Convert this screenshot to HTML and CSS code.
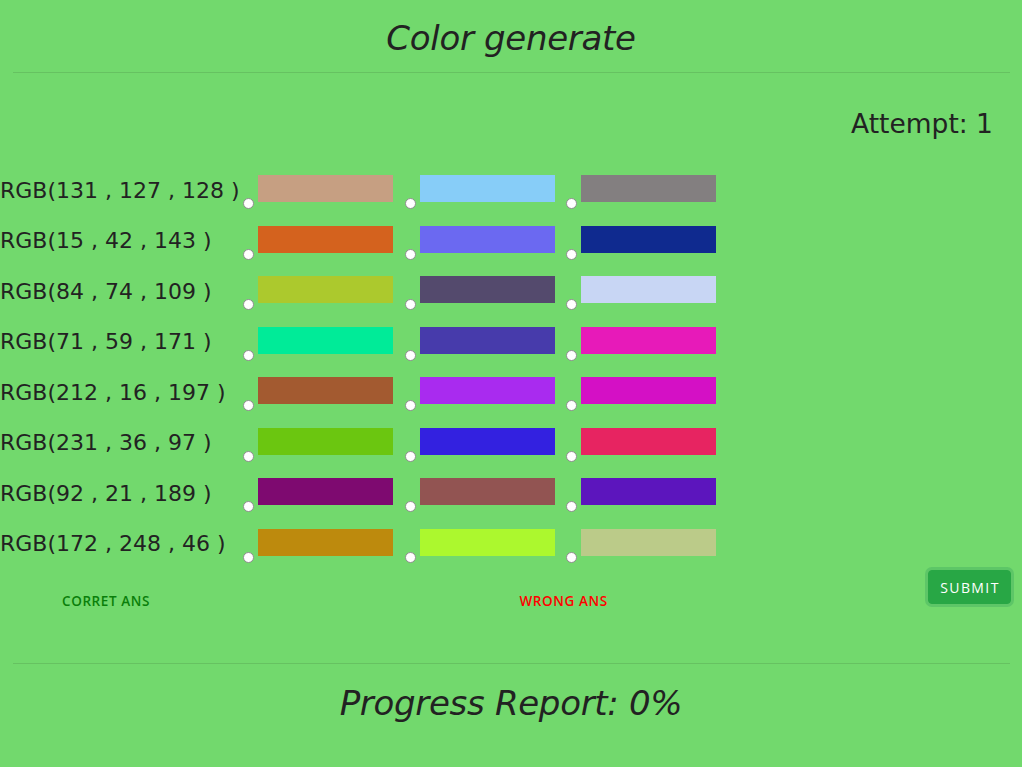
FILE: index.html
```html
<!DOCTYPE html>
<html lang="en">
<head>
<meta charset="utf-8">
<title>Color generate</title>
<link rel="stylesheet" href="styles.css">
</head>
<body>
<header class="top">
  <h1 class="title">Color generate</h1>
</header>
<div class="rule"></div>
<div class="attempt">Attempt: 1</div>

<div class="rows">
  <div class="row">
    <span class="label">RGB(131 , 127 , 128 )</span>
    <label class="opt"><input type="radio" name="q1" class="radio"><span class="swatch" style="background:#c69f82"></span></label>
    <label class="opt"><input type="radio" name="q1" class="radio"><span class="swatch" style="background:#87cdf8"></span></label>
    <label class="opt"><input type="radio" name="q1" class="radio"><span class="swatch" style="background:rgb(131,127,128)"></span></label>
  </div>
  <div class="row">
    <span class="label">RGB(15 , 42 , 143 )</span>
    <label class="opt"><input type="radio" name="q2" class="radio"><span class="swatch" style="background:#d4621e"></span></label>
    <label class="opt"><input type="radio" name="q2" class="radio"><span class="swatch" style="background:#6b69f1"></span></label>
    <label class="opt"><input type="radio" name="q2" class="radio"><span class="swatch" style="background:rgb(15,42,143)"></span></label>
  </div>
  <div class="row">
    <span class="label">RGB(84 , 74 , 109 )</span>
    <label class="opt"><input type="radio" name="q3" class="radio"><span class="swatch" style="background:#acc92d"></span></label>
    <label class="opt"><input type="radio" name="q3" class="radio"><span class="swatch" style="background:rgb(84,74,109)"></span></label>
    <label class="opt"><input type="radio" name="q3" class="radio"><span class="swatch" style="background:#c8d6f4"></span></label>
  </div>
  <div class="row">
    <span class="label">RGB(71 , 59 , 171 )</span>
    <label class="opt"><input type="radio" name="q4" class="radio"><span class="swatch" style="background:#00eb98"></span></label>
    <label class="opt"><input type="radio" name="q4" class="radio"><span class="swatch" style="background:rgb(71,59,171)"></span></label>
    <label class="opt"><input type="radio" name="q4" class="radio"><span class="swatch" style="background:#e71ab9"></span></label>
  </div>
  <div class="row">
    <span class="label">RGB(212 , 16 , 197 )</span>
    <label class="opt"><input type="radio" name="q5" class="radio"><span class="swatch" style="background:#a35a30"></span></label>
    <label class="opt"><input type="radio" name="q5" class="radio"><span class="swatch" style="background:#a92bef"></span></label>
    <label class="opt"><input type="radio" name="q5" class="radio"><span class="swatch" style="background:rgb(212,16,197)"></span></label>
  </div>
  <div class="row">
    <span class="label">RGB(231 , 36 , 97 )</span>
    <label class="opt"><input type="radio" name="q6" class="radio"><span class="swatch" style="background:#6bc610"></span></label>
    <label class="opt"><input type="radio" name="q6" class="radio"><span class="swatch" style="background:#3321e0"></span></label>
    <label class="opt"><input type="radio" name="q6" class="radio"><span class="swatch" style="background:rgb(231,36,97)"></span></label>
  </div>
  <div class="row">
    <span class="label">RGB(92 , 21 , 189 )</span>
    <label class="opt"><input type="radio" name="q7" class="radio"><span class="swatch" style="background:#7e0a70"></span></label>
    <label class="opt"><input type="radio" name="q7" class="radio"><span class="swatch" style="background:#925452"></span></label>
    <label class="opt"><input type="radio" name="q7" class="radio"><span class="swatch" style="background:rgb(92,21,189)"></span></label>
  </div>
  <div class="row">
    <span class="label">RGB(172 , 248 , 46 )</span>
    <label class="opt"><input type="radio" name="q8" class="radio"><span class="swatch" style="background:#bd8a0d"></span></label>
    <label class="opt"><input type="radio" name="q8" class="radio"><span class="swatch" style="background:rgb(172,248,46)"></span></label>
    <label class="opt"><input type="radio" name="q8" class="radio"><span class="swatch" style="background:#bbcb89"></span></label>
  </div>
</div>

<div class="bottom">
  <span class="ans ans-correct">CORRET ANS</span>
  <span class="ans ans-wrong">WRONG ANS</span>
  <button class="submit" type="button">SUBMIT</button>
</div>

<div class="rule rule-bottom"></div>
<h2 class="progress">Progress Report: 0%</h2>
</body>
</html>
```

FILE: styles.css
```css
* { box-sizing: border-box; }

html, body {
  margin: 0;
  padding: 0;
}

body {
  background: #72d96d;
  color: #212529;
  font-family: "DejaVu Sans", sans-serif;
  width: 1022px;
  height: 767px;
  overflow: hidden;
}

.top {
  padding-top: 18px;
}

.title {
  margin: 0;
  font-size: 34px;
  line-height: 40px;
  font-weight: normal;
  font-style: oblique;
  letter-spacing: -0.3px;
  text-align: center;
  color: #222;
}

.rule {
  margin: 14px 12px 0 13px;
  border-top: 1px solid rgba(0, 0, 0, 0.1);
}

.attempt {
  margin-top: 35px;
  padding-right: 29px;
  text-align: right;
  font-size: 26.5px;
  line-height: 32px;
  color: #222;
}

.rows {
  margin-top: 35px;
  display: flex;
  flex-direction: column;
  gap: 16.5px;
}

.row {
  display: flex;
  align-items: flex-start;
  height: 34px;
}

.label {
  width: 243px;
  flex: none;
  font-size: 22px;
  line-height: 27px;
  padding-top: 1.5px;
  white-space: nowrap;
  color: #222;
}

.opt {
  display: flex;
  align-items: flex-start;
  margin-right: 11.5px;
}

.radio {
  appearance: none;
  -webkit-appearance: none;
  width: 11px;
  height: 11px;
  margin: 23px 4px 0 0;
  border: 1px solid #8f8f8f;
  border-radius: 50%;
  background: #fff;
  flex: none;
}

.swatch {
  display: block;
  width: 135px;
  height: 27px;
}

.bottom {
  margin-top: 7.5px;
  display: flex;
  align-items: flex-start;
  height: 34px;
  padding-left: 62px;
}

.ans {
  margin-top: 23px;
  font-family: "Open Sans", sans-serif;
  font-weight: 600;
  font-size: 13.5px;
  line-height: 16px;
  letter-spacing: 0.6px;
}

.ans-correct {
  color: #0a7f0a;
  width: 457.5px;
}

.ans-wrong {
  color: #ff0000;
}

.submit {
  margin-left: auto;
  margin-right: 11px;
  width: 83px;
  height: 34px;
  border: 1px solid #28a745;
  border-radius: 4px;
  background: #28a745;
  color: #fff;
  font-family: "Open Sans", sans-serif;
  font-size: 14px;
  letter-spacing: 1.4px;
  padding: 0 0 0 1px;
  box-shadow: 0 0 0 3px rgba(72, 180, 97, 0.5);
}

.rule-bottom {
  margin-top: 59px;
}

.progress {
  margin: 19px 0 0;
  font-size: 34px;
  line-height: 40px;
  font-weight: normal;
  font-style: oblique;
  letter-spacing: -0.3px;
  text-align: center;
  color: #222;
}
```
